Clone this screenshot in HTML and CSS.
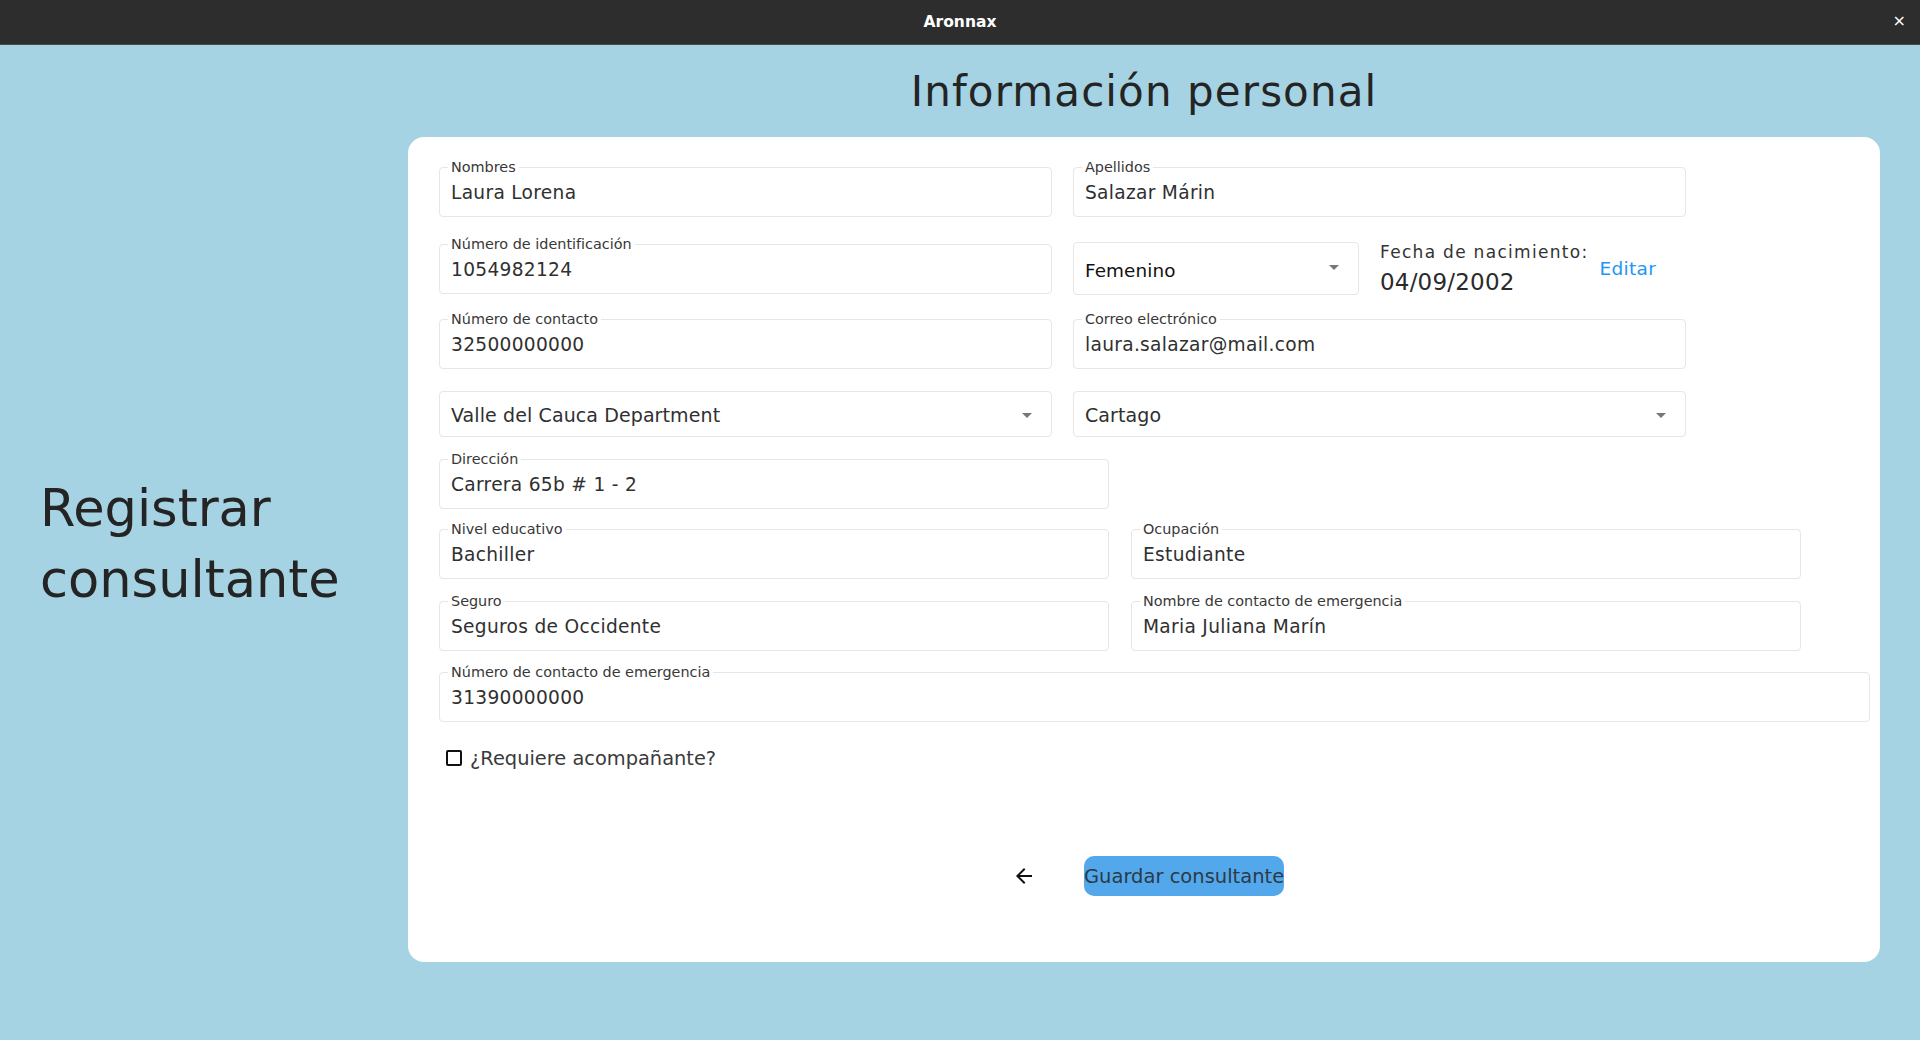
FILE: index.html
```html
<!DOCTYPE html>
<html lang="es">
<head>
<meta charset="utf-8">
<title>Aronnax</title>
<link rel="stylesheet" href="styles.css">
</head>
<body>
<header class="titlebar">
  <span class="app-title">Aronnax</span>
  <span class="close">×</span>
</header>
<div class="main">
  <aside class="side">
    <h1 class="side-title">Registrar<br>consultante</h1>
  </aside>
  <section class="content">
    <h2 class="page-title">Información personal</h2>
    <div class="card">
      <div class="row row-1">
        <div class="field w-half"><span class="label">Nombres</span><span class="value">Laura Lorena</span></div>
        <div class="field w-half"><span class="label">Apellidos</span><span class="value">Salazar Márin</span></div>
      </div>
      <div class="row row-2">
        <div class="field w-half"><span class="label">Número de identificación</span><span class="value">1054982124</span></div>
        <div class="select gender"><span class="select-value dark">Femenino</span><span class="caret"></span></div>
        <div class="birth">
          <span class="birth-label">Fecha de nacimiento:</span>
          <span class="birth-date">04/09/2002</span>
        </div>
        <span class="edit">Editar</span>
      </div>
      <div class="row row-3">
        <div class="field w-half"><span class="label">Número de contacto</span><span class="value">32500000000</span></div>
        <div class="field w-half"><span class="label">Correo electrónico</span><span class="value">laura.salazar@mail.com</span></div>
      </div>
      <div class="row row-4">
        <div class="select w-half"><span class="select-value">Valle del Cauca Department</span><span class="caret"></span></div>
        <div class="select w-half"><span class="select-value">Cartago</span><span class="caret"></span></div>
      </div>
      <div class="row row-5">
        <div class="field w-wide"><span class="label">Dirección</span><span class="value">Carrera 65b # 1 - 2</span></div>
      </div>
      <div class="row row-6">
        <div class="field w-wide"><span class="label">Nivel educativo</span><span class="value">Bachiller</span></div>
        <div class="field w-wide"><span class="label">Ocupación</span><span class="value">Estudiante</span></div>
      </div>
      <div class="row row-7">
        <div class="field w-wide"><span class="label">Seguro</span><span class="value">Seguros de Occidente</span></div>
        <div class="field w-wide"><span class="label">Nombre de contacto de emergencia</span><span class="value">Maria Juliana Marín</span></div>
      </div>
      <div class="row row-8">
        <div class="field w-full"><span class="label">Número de contacto de emergencia</span><span class="value">31390000000</span></div>
      </div>
      <label class="check-row">
        <span class="checkbox"></span>
        <span class="check-text">¿Requiere acompañante?</span>
      </label>
      <div class="actions">
        <span class="back">
          <svg width="24" height="24" viewBox="0 0 24 24"><path d="M20 11H7.83l5.59-5.59L12 4l-8 8 8 8 1.41-1.41L7.83 13H20v-2z" fill="#111"/></svg>
        </span>
        <button class="save">Guardar consultante</button>
      </div>
    </div>
  </section>
</div>
</body>
</html>
```

FILE: styles.css
```css
html, body {
  margin: 0;
  padding: 0;
}
body {
  width: 1920px;
  height: 1040px;
  overflow: hidden;
  background: #a5d3e3;
  font-family: "DejaVu Sans", "Noto Sans", sans-serif;
  color: #2a2a2a;
}
.titlebar {
  height: 44px;
  background: #2d2d2d;
  border-bottom: 1px solid #4a4a4a;
  display: flex;
  align-items: center;
  justify-content: center;
  position: relative;
}
.app-title {
  color: #ffffff;
  font-weight: bold;
  font-size: 15.5px;
}
.close {
  position: absolute;
  right: 14px;
  top: 11px;
  color: #ffffff;
  font-size: 16px;
}
.main {
  display: flex;
  height: 995px;
}
.side {
  width: 408px;
  flex: none;
  box-sizing: border-box;
  padding-left: 40px;
  display: flex;
  align-items: center;
}
.side-title {
  margin: 0;
  font-size: 51px;
  font-weight: normal;
  line-height: 71px;
  color: #242424;
  padding-top: 3px;
}
.content {
  width: 1472px;
  flex: none;
  display: flex;
  flex-direction: column;
}
.page-title {
  margin: 0;
  height: 92px;
  line-height: 94px;
  text-align: center;
  font-size: 42px;
  font-weight: normal;
  letter-spacing: 1.1px;
  color: #242424;
}
.card {
  background: #ffffff;
  border-radius: 16px;
  height: 825px;
  box-sizing: border-box;
  padding: 30px 10px 0 31px;
  display: flex;
  flex-direction: column;
}
.row {
  display: flex;
}
.row-1 { gap: 21px; }
.row-2 { gap: 21px; margin-top: 25px; height: 53px; align-items: center; }
.row-3 { gap: 21px; margin-top: 24px; }
.row-4 { gap: 21px; margin-top: 22px; }
.row-5 { margin-top: 22px; }
.row-6 { gap: 22px; margin-top: 20px; }
.row-7 { gap: 22px; margin-top: 22px; }
.row-8 { margin-top: 21px; }

.w-half { width: 613px; }
.w-wide { width: 670px; }
.w-full { width: 1431px; }

.field {
  position: relative;
  box-sizing: border-box;
  height: 50px;
  border: 1px solid #e6e6e6;
  border-radius: 4px;
  padding: 0 11px;
  flex: none;
}
.label {
  position: absolute;
  left: 8px;
  top: -9px;
  padding: 0 3px;
  background: #fff;
  font-size: 14.4px;
  line-height: 16px;
  color: #383838;
  white-space: nowrap;
}
.value {
  display: block;
  font-size: 18.6px;
  letter-spacing: 0.3px;
  line-height: 48px;
  padding-top: 1px;
  color: #303030;
  white-space: nowrap;
}
.select {
  position: relative;
  box-sizing: border-box;
  height: 46px;
  border: 1px solid #e6e6e6;
  border-radius: 4px;
  padding: 2px 11px 0;
  display: flex;
  align-items: center;
  flex: none;
}
.select.gender {
  width: 286px;
  height: 53px;
  padding-top: 3px;
}
.select-value {
  font-size: 19px;
  letter-spacing: 0.1px;
  color: #303030;
  white-space: nowrap;
  flex: 1;
}
.select-value.dark {
  color: #111;
  font-size: 18.4px;
}
.caret {
  width: 0;
  height: 0;
  border-left: 5px solid transparent;
  border-right: 5px solid transparent;
  border-top: 5px solid #777;
  margin-right: 8px;
  flex: none;
}
.gender .caret {
  margin-top: -6px;
}
.birth {
  display: flex;
  flex-direction: column;
  align-self: flex-start;
}
.birth-label {
  font-size: 17px;
  line-height: 20px;
  color: #333;
  letter-spacing: 1.3px;
  white-space: nowrap;
}
.birth-date {
  font-size: 23px;
  letter-spacing: 0.2px;
  line-height: 40px;
  color: #2a2a2a;
  white-space: nowrap;
}
.edit {
  margin-left: -10px;
  font-size: 18.5px;
  letter-spacing: 0.3px;
  color: #2196f3;
}
.check-row {
  display: flex;
  align-items: center;
  margin-top: 24px;
  padding-left: 7px;
  height: 24px;
  gap: 8px;
}
.checkbox {
  width: 16px;
  height: 16px;
  box-sizing: border-box;
  border: 2px solid #111;
  border-radius: 2px;
  flex: none;
}
.check-text {
  font-size: 19.4px;
  color: #3a3a3a;
}
.actions {
  display: flex;
  justify-content: center;
  align-items: center;
  gap: 40px;
  margin: 86px -10px 0 -31px;
}
.back {
  width: 40px;
  height: 40px;
  display: flex;
  align-items: center;
  justify-content: center;
}
.save {
  width: 200px;
  height: 40px;
  border: none;
  border-radius: 10px;
  background: #53a8ec;
  color: #2b3a47;
  font-family: inherit;
  font-size: 19.5px;
  padding: 0;
  white-space: nowrap;
}
```
